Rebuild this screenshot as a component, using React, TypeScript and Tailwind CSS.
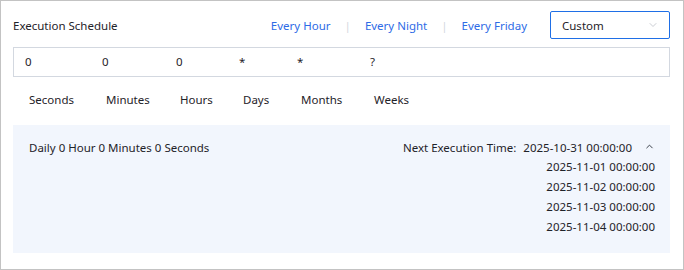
import { ChevronDown, ChevronUp } from 'lucide-react';

const presets = ['Every Hour', 'Every Night', 'Every Friday'];

const fields = [
  { value: '0', label: 'Seconds', w: 'w-[77px]' },
  { value: '0', label: 'Minutes', w: 'w-[74px]' },
  { value: '0', label: 'Hours', w: 'w-[63px]' },
  { value: '*', label: 'Days', w: 'w-[58px]' },
  { value: '*', label: 'Months', w: 'w-[73px]' },
  { value: '?', label: 'Weeks', w: 'w-[80px]' },
];

const upcoming = [
  '2025-11-01 00:00:00',
  '2025-11-02 00:00:00',
  '2025-11-03 00:00:00',
  '2025-11-04 00:00:00',
];

export default function App() {
  return (
    <div
      className="flex h-[270px] w-[684px] flex-col border border-[#c3c3c3] bg-white pl-[12px] pr-[13px] pt-[10px] text-[11.5px] text-[#1f2329]"
      style={{ fontFamily: '"Noto Sans", "Open Sans", sans-serif' }}
    >
      {/* Header */}
      <div className="flex h-[28px] items-center">
        <span className="pt-[1px]">Execution Schedule</span>
        <div className="ml-auto flex items-center">
          {presets.map((p, i) => (
            <div key={p} className="flex items-center pt-[1px]">
              {i > 0 && <span className="mx-[14px] text-[#d3d7de]">|</span>}
              <a className="cursor-pointer text-[#2e6be6]">{p}</a>
            </div>
          ))}
          <div className="ml-[23px] flex h-[28px] w-[120px] items-center rounded-[2px] border border-[#1f6fe6] pl-[11px] pr-[10px]">
            <span className="pt-[1px]">Custom</span>
            <ChevronDown className="ml-auto h-[12px] w-[12px] text-[#b8bcc4]" strokeWidth={1.5} />
          </div>
        </div>
      </div>

      {/* Cron values */}
      <div className="mt-[8px] flex h-[30px] items-center border border-[#d3d8e0] pl-[11px]">
        {fields.map((f, i) => (
          <span key={i} className={f.w}>
            {f.value}
          </span>
        ))}
      </div>

      {/* Field labels */}
      <div className="mt-[7px] flex h-[32px] items-center pl-[16px]">
        {fields.map((f) => (
          <span key={f.label} className={f.w}>
            {f.label}
          </span>
        ))}
      </div>

      {/* Summary panel */}
      <div className="mt-[9px] flex h-[128px] items-start bg-[#f2f6fd] pl-[16px] pr-[15px] pt-[13px]">
        <span className="leading-[20px]">Daily 0 Hour 0 Minutes 0 Seconds</span>
        <div className="ml-auto flex flex-col items-end leading-[20px]">
          <div className="flex h-[19px] items-start">
            <span>Next Execution Time:</span>
            <span className="ml-[7px]">2025-10-31 00:00:00</span>
            <ChevronUp className="ml-[12px] mt-[3px] h-[11px] w-[11px] text-[#2b313b]" strokeWidth={2} />
          </div>
          {upcoming.map((d) => (
            <span key={d}>{d}</span>
          ))}
        </div>
      </div>
    </div>
  );
}
